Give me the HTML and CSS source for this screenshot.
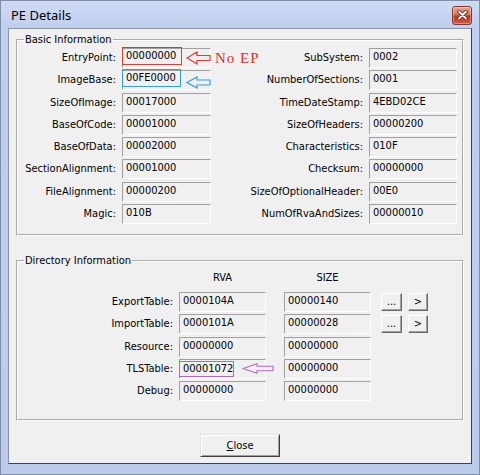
FILE: index.html
```html
<!DOCTYPE html>
<html>
<head>
<meta charset="utf-8">
<title>PE Details</title>
<link rel="stylesheet" href="styles.css">
</head>
<body>
<div class="window">
  <div class="titlebar">
    <span class="title">PE Details</span>
    <span class="close-x">
      <svg width="11" height="10" viewBox="0 0 11 10">
        <path d="M2,1.5 L9,8.5 M9,1.5 L2,8.5" stroke="#6b2418" stroke-width="3.6" stroke-linecap="round"/>
        <path d="M2,1.5 L9,8.5 M9,1.5 L2,8.5" stroke="#ffffff" stroke-width="1.8" stroke-linecap="round"/>
      </svg>
    </span>
  </div>
  <div class="client">
    <fieldset class="group">
      <legend>Basic Information</legend>
      <div class="basic">
        <div class="brow">
          <span class="lbl lbl-a">EntryPoint:</span>
          <span class="field fa"><span class="mark mark-red">00000000</span>
            <span class="note note-red">
              <svg width="25" height="14" viewBox="0 0 25 14"><polygon points="1,7 11,1 11,4.5 24,4.5 24,9.5 11,9.5 11,13" fill="none" stroke="#e23a36" stroke-width="1.2"/></svg>
              <span class="note-text">No EP</span>
            </span>
          </span>
          <span class="lbl lbl-b">SubSystem:</span>
          <span class="field fb">0002</span>
        </div>
        <div class="brow">
          <span class="lbl lbl-a">ImageBase:</span>
          <span class="field fa"><span class="mark mark-blue">00FE0000</span>
            <span class="note note-blue">
              <svg width="25" height="13" viewBox="0 0 25 13"><polygon points="1,6.5 11,1 11,4 24,4 24,9 11,9 11,12" fill="none" stroke="#2fa2dc" stroke-width="1.2"/></svg>
            </span>
          </span>
          <span class="lbl lbl-b">NumberOfSections:</span>
          <span class="field fb">0001</span>
        </div>
        <div class="brow">
          <span class="lbl lbl-a">SizeOfImage:</span>
          <span class="field fa">00017000</span>
          <span class="lbl lbl-b">TimeDateStamp:</span>
          <span class="field fb">4EBD02CE</span>
        </div>
        <div class="brow">
          <span class="lbl lbl-a">BaseOfCode:</span>
          <span class="field fa">00001000</span>
          <span class="lbl lbl-b">SizeOfHeaders:</span>
          <span class="field fb">00000200</span>
        </div>
        <div class="brow">
          <span class="lbl lbl-a">BaseOfData:</span>
          <span class="field fa">00002000</span>
          <span class="lbl lbl-b">Characteristics:</span>
          <span class="field fb">010F</span>
        </div>
        <div class="brow">
          <span class="lbl lbl-a">SectionAlignment:</span>
          <span class="field fa">00001000</span>
          <span class="lbl lbl-b">Checksum:</span>
          <span class="field fb">00000000</span>
        </div>
        <div class="brow">
          <span class="lbl lbl-a">FileAlignment:</span>
          <span class="field fa">00000200</span>
          <span class="lbl lbl-b">SizeOfOptionalHeader:</span>
          <span class="field fb">00E0</span>
        </div>
        <div class="brow">
          <span class="lbl lbl-a">Magic:</span>
          <span class="field fa">010B</span>
          <span class="lbl lbl-b">NumOfRvaAndSizes:</span>
          <span class="field fb">00000010</span>
        </div>
      </div>
    </fieldset>

    <fieldset class="group group-dir">
      <legend>Directory Information</legend>
      <div class="dir">
        <div class="dhead">
          <span class="dlbl"></span>
          <span class="col-h col-rva">RVA</span>
          <span class="col-h col-size">SIZE</span>
        </div>
        <div class="drows">
          <div class="drow">
            <span class="dlbl">ExportTable:</span>
            <span class="field col-rva">0000104A</span>
            <span class="field col-size">00000140</span>
            <button class="btn btn-more">...</button>
            <button class="btn btn-go">&gt;</button>
          </div>
          <div class="drow">
            <span class="dlbl">ImportTable:</span>
            <span class="field col-rva">0000101A</span>
            <span class="field col-size">00000028</span>
            <button class="btn btn-more">...</button>
            <button class="btn btn-go">&gt;</button>
          </div>
          <div class="drow">
            <span class="dlbl">Resource:</span>
            <span class="field col-rva">00000000</span>
            <span class="field col-size">00000000</span>
          </div>
          <div class="drow">
            <span class="dlbl">TLSTable:</span>
            <span class="field col-rva"><span class="mark mark-purple">00001072</span>
              <span class="note note-purple">
                <svg width="32" height="11" viewBox="0 0 32 11"><polygon points="1,5.5 15,0.8 15,3.2 31,3.2 31,7.8 15,7.8 15,10.2" fill="none" stroke="#b866c6" stroke-width="1.1"/></svg>
              </span>
            </span>
            <span class="field col-size">00000000</span>
          </div>
          <div class="drow">
            <span class="dlbl">Debug:</span>
            <span class="field col-rva">00000000</span>
            <span class="field col-size">00000000</span>
          </div>
        </div>
      </div>
    </fieldset>

    <div class="footer">
      <button class="btn btn-close"><span class="u">C</span>lose</button>
    </div>
  </div>
</div>
</body>
</html>
```

FILE: styles.css
```css
html, body {
  margin: 0;
  padding: 0;
}

body {
  width: 480px;
  height: 475px;
  overflow: hidden;
  background: #ffffff;
  font-family: "DejaVu Sans Condensed", "DejaVu Sans", sans-serif;
  font-stretch: condensed;
  font-size: 11px;
  color: #000;
}

.window {
  box-sizing: border-box;
  width: 480px;
  height: 475px;
  border: 1px solid #7f8da6;
  background: linear-gradient(180deg, #cfdbf4 0, #c0cfef 26px, #bacbec 100%);
  display: flex;
  flex-direction: column;
  padding: 0 7px 10px 7px;
}

.titlebar {
  height: 27px;
  flex: none;
  display: flex;
  align-items: center;
  justify-content: space-between;
}

.title {
  font-family: "Noto Sans", "Open Sans", sans-serif;
  font-stretch: normal;
  font-size: 13px;
  padding-left: 3px;
  color: #000;
}

.close-x {
  box-sizing: border-box;
  width: 20px;
  height: 19px;
  margin-top: 1px;
  border: 1px solid #86392b;
  border-radius: 3px;
  background: linear-gradient(180deg, #eaa596 0, #d87a66 40%, #c2391f 55%, #d4563b 100%);
  display: flex;
  align-items: center;
  justify-content: center;
  box-shadow: inset 0 0 0 1px rgba(255, 255, 255, 0.35);
}

.client {
  flex: 1;
  background: #f0f0f0;
  border: 1px solid;
  border-color: #8793a6 #3c424c #3c424c #8793a6;
  display: flex;
  flex-direction: column;
}

.group {
  margin: 5px 7px 0 7px;
  padding: 0;
  border: 2px groove #ffffff;
  min-width: 0;
}

.group legend {
  margin-left: 6px;
  padding: 0 1px;
  line-height: 11px;
}

.group-dir {
  margin-top: 19px;
}

.basic {
  padding: 3px 0 10px 2px;
  display: flex;
  flex-direction: column;
  gap: 2.3px;
}

.brow {
  display: flex;
  align-items: flex-start;
  height: 20px;
}

.lbl {
  text-align: right;
  line-height: 20px;
  white-space: nowrap;
}

.lbl-a {
  width: 96px;
}

.lbl-b {
  width: 148px;
  margin-left: 4px;
}

.field {
  box-sizing: border-box;
  position: relative;
  display: flex;
  align-items: flex-start;
  height: 20px;
  margin-left: 6px;
  padding-left: 3px;
  border: 1px solid;
  border-color: #a0a0a0 #ffffff #ffffff #a0a0a0;
  line-height: 15px;
  white-space: nowrap;
}

.fa {
  width: 89px;
}

.fb {
  width: 88px;
}

.mark {
  box-sizing: border-box;
  display: block;
  height: 18px;
  margin: -2px 0 0 -4px;
  padding: 0 5px 0 3px;
  border: 1px solid;
  line-height: 16px;
}

.mark-red {
  border-color: #e23a36;
}

.mark-blue {
  border-color: #2fa2dc;
  padding-right: 4px;
}

.mark-purple {
  border-color: #b866c6;
  height: 16px;
  margin-top: 1px;
  line-height: 13px;
  padding-right: 0;
}

.note {
  position: absolute;
  display: flex;
  align-items: center;
  gap: 4px;
}

.note svg {
  display: block;
}

.note-red {
  left: 63px;
  top: 2px;
}

.note-blue {
  left: 63px;
  top: 5px;
}

.note-purple {
  left: 62px;
  top: 3px;
}

.note-text {
  font-family: "Liberation Serif", "DejaVu Serif", serif;
  font-stretch: normal;
  font-size: 15px;
  letter-spacing: 1px;
  line-height: 14px;
  color: #e0302c;
}

.dir {
  padding: 5px 0 18px 2px;
}

.dhead {
  display: flex;
  height: 13px;
  line-height: 13px;
  margin-bottom: 8px;
}

.col-h {
  text-align: center;
}

.dlbl {
  width: 153px;
  flex: none;
  text-align: right;
  line-height: 20px;
  white-space: nowrap;
}

.dhead .dlbl {
  line-height: 13px;
}

.col-rva {
  width: 87px;
  margin-left: 6px;
}

.col-size {
  width: 87px;
  margin-left: 18px;
}

.drows {
  display: flex;
  flex-direction: column;
  gap: 2.3px;
}

.drow {
  display: flex;
  align-items: flex-start;
  height: 20px;
}

.btn {
  box-sizing: border-box;
  background: #f0f0f0;
  border: 1px solid;
  border-color: #ffffff #696969 #696969 #ffffff;
  box-shadow: inset -1px -1px 0 #a0a0a0;
  font-family: inherit;
  font-stretch: inherit;
  font-size: 11px;
  color: #000;
  padding: 0;
  margin: 0;
}

.btn-more {
  width: 21px;
  height: 18px;
  margin-left: 10px;
  margin-top: 1px;
  line-height: 14px;
}

.btn-go {
  width: 20px;
  height: 18px;
  margin-left: 6px;
  margin-top: 1px;
  line-height: 14px;
}

.footer {
  display: flex;
  justify-content: center;
  margin-top: 13px;
}

.btn-close {
  width: 80px;
  height: 23px;
  border-color: #e3e3e3 #404040 #404040 #e3e3e3;
  box-shadow: inset 1px 1px 0 #ffffff, inset -1px -1px 0 #a0a0a0;
  line-height: 19px;
}

.u {
  text-decoration: underline;
}
```
